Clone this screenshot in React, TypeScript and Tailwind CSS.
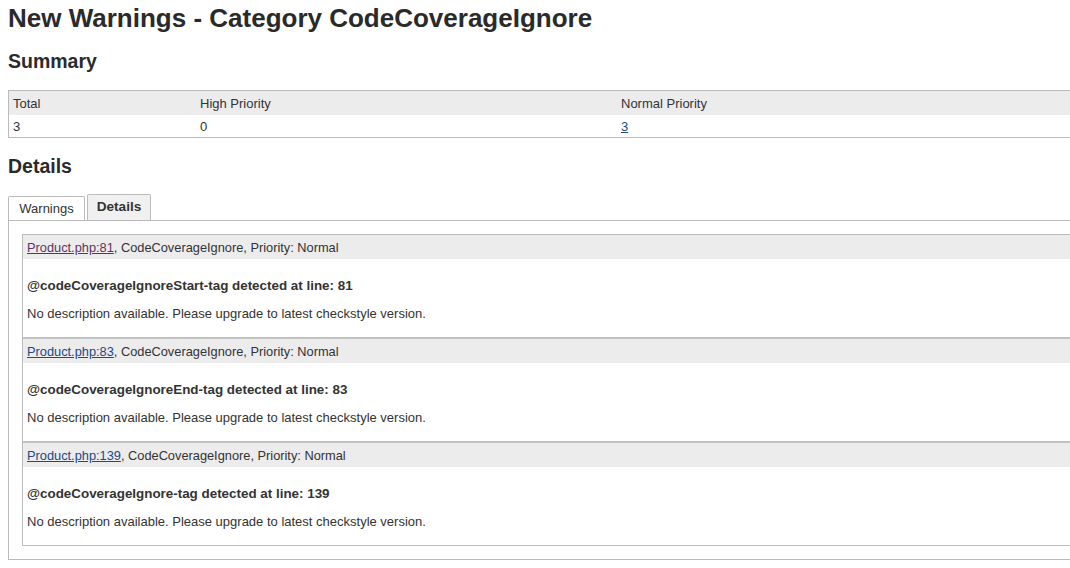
import React from "react"

const warnings = [
  { file: "Product.php:81", visited: true, title: "@codeCoverageIgnoreStart-tag detected at line: 81" },
  { file: "Product.php:83", visited: false, title: "@codeCoverageIgnoreEnd-tag detected at line: 83" },
  { file: "Product.php:139", visited: false, title: "@codeCoverageIgnore-tag detected at line: 139" },
]

export default function App() {
  return (
    <div className="w-[1070px] h-[568px] overflow-hidden bg-white text-[#333] text-[13px] font-['Liberation_Sans',Arial,sans-serif]">
      <div className="w-[1130px] pl-2">
        <h1 className="mt-[1px] text-[26px] leading-[34px] font-bold text-[#2a2a2a]">
          New Warnings - Category CodeCoverageIgnore
        </h1>

        <h2 className="mt-[14px] text-[19.5px] leading-[24px] font-bold text-[#2a2a2a]">Summary</h2>

        {/* Summary table */}
        <div className="mt-[17px] border border-[#bbb]">
          <div className="flex h-6 items-center bg-[#ececec] pt-px">
            <div className="w-[187px] pl-1">Total</div>
            <div className="w-[421px] pl-1">High Priority</div>
            <div className="pl-1">Normal Priority</div>
          </div>
          <div className="flex h-[22px] items-center pt-px">
            <div className="w-[187px] pl-1">3</div>
            <div className="w-[421px] pl-1">0</div>
            <div className="pl-1">
              <span className="text-[#204a87] underline">3</span>
            </div>
          </div>
        </div>

        <h2 className="mt-[16px] text-[19.5px] leading-[24px] font-bold text-[#2a2a2a]">Details</h2>

        {/* Tabs */}
        <div className="mt-4 flex items-end gap-[2px]">
          <div className="flex h-[24px] w-[77px] items-center justify-center rounded-t-[2px] border border-b-0 border-[#bbb] bg-white">
            Warnings
          </div>
          <div className="flex h-[26px] w-[64px] items-center justify-center rounded-t-[2px] border border-b-0 border-[#bbb] bg-[#f0f0f0] text-[13.6px] font-bold">
            Details
          </div>
        </div>

        <div className="border border-[#bbb] p-[13px]">
          <div className="border border-[#bbb]">
            {warnings.map((w, i) => (
              <div key={w.file} className={i > 0 ? "border-t-2 border-[#c2c2c2]" : ""}>
                <div className="flex h-6 items-center bg-[#ececec] pl-1 pt-px text-[12.8px]">
                  <span className={w.visited ? "text-[#5c3566] underline" : "text-[#204a87] underline"}>{w.file}</span>
                  <span>, CodeCoverageIgnore, Priority: Normal</span>
                </div>
                <div className="pl-1 pt-[19px] pb-[15px]">
                  <div className="leading-4 text-[13.4px] font-bold">{w.title}</div>
                  <div className="mt-3 leading-4">No description available. Please upgrade to latest checkstyle version.</div>
                </div>
              </div>
            ))}
          </div>
        </div>
      </div>
    </div>
  )
}
